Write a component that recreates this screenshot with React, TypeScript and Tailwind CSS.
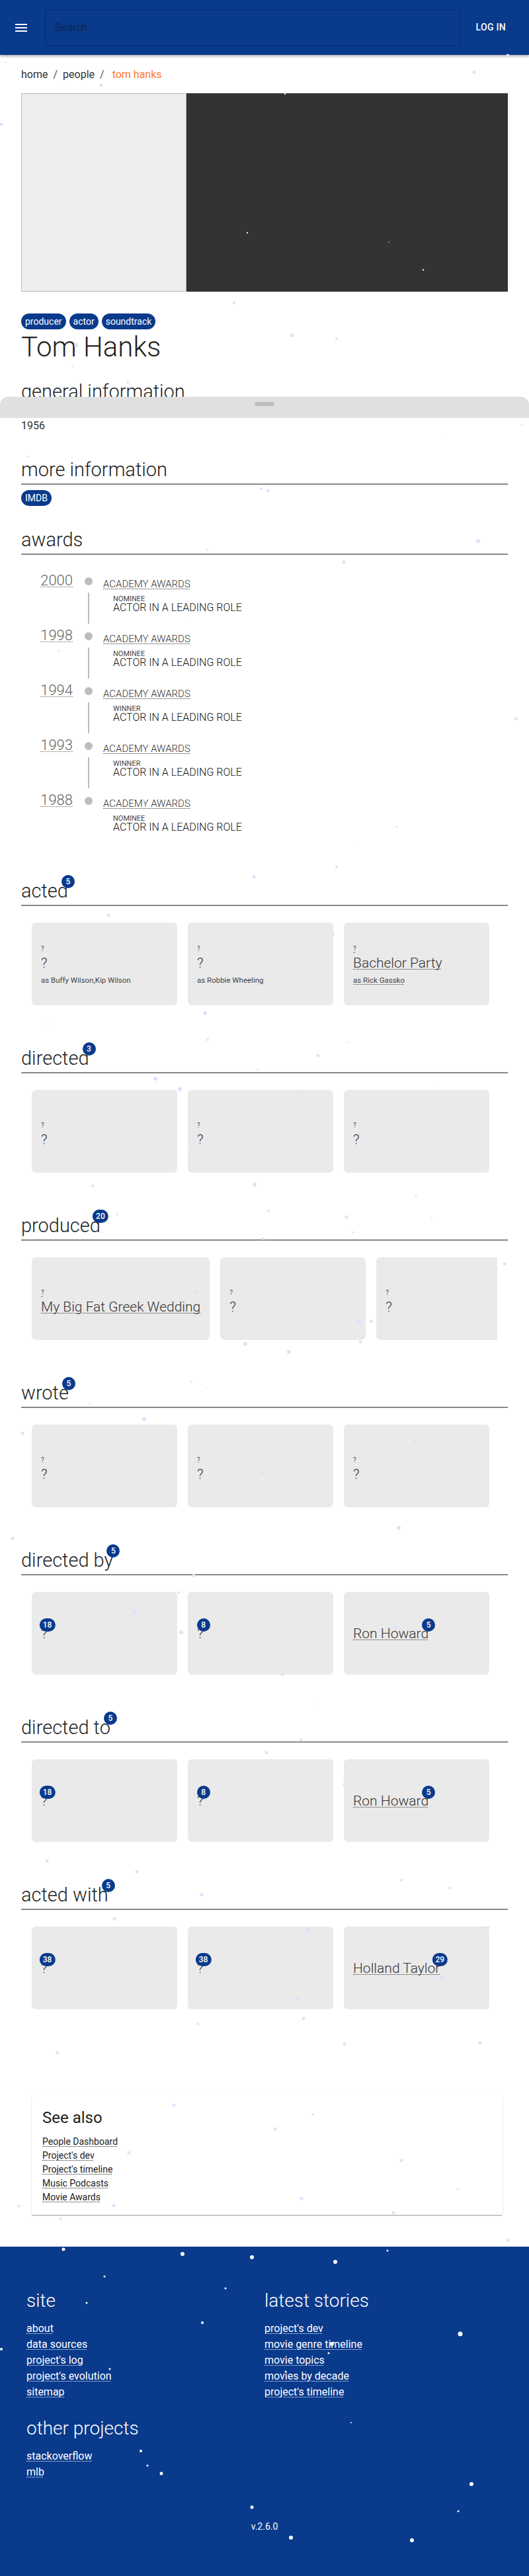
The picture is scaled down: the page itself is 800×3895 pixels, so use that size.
import React from "react";

const BLUE = "bg-[#0a3a8c]";

const dots: [number, number, number][] = [
  [768, 84, 2.5], [9, 94, 1.5], [153, 129, 2.5], [717, 109, 2.5],
  [431, 142, 1.2], [2, 188, 2.5], [374, 352, 1.2], [588, 366, 0.8], [640, 408, 1.2], [354, 458, 2],
  [442, 507, 3], [509, 512, 2], [115, 522, 3], [110, 554, 1.5], [193, 578, 2], [789, 643, 1.5],
  [669, 656, 1], [43, 690, 1.5], [395, 739, 2], [405, 742, 2.5], [486, 735, 1],
  [723, 818, 3], [314, 831, 1.5], [520, 850, 2.5], [287, 940, 1], [89, 984, 1.5], [780, 1087, 2.5],
  [217, 1210, 2], [600, 1250, 1.5],
  [540, 1280, 1], [509, 1311, 2], [384, 1326, 2.5], [164, 1384, 2.5], [196, 1420, 1.5], [504, 1413, 2],
  [310, 1532, 3], [73, 1549, 1], [314, 1572, 2], [525, 1576, 1.2], [481, 1596, 2.5], [390, 1617, 1.5],
  [235, 1631, 3], [272, 1647, 3], [453, 1653, 1.2], [657, 1638, 1], [115, 1668, 1.2], [289, 1734, 1.5],
  [140, 1793, 2], [385, 1791, 3], [629, 1809, 1.5], [406, 1831, 2], [524, 1840, 2.5], [177, 1836, 1.5],
  [653, 1842, 1.2], [533, 1863, 1.5], [398, 1873, 2], [763, 1911, 2.5], [297, 1954, 2.5], [435, 1919, 1.5],
  [449, 1960, 1.5], [543, 1999, 3], [561, 1998, 2.5], [537, 2019, 1.5], [660, 2019, 2], [371, 2032, 3],
  [545, 2029, 2.5], [437, 2044, 3], [289, 2089, 1.5], [312, 2098, 1], [136, 2122, 1.5], [218, 2146, 3],
  [34, 2167, 2.5], [191, 2182, 2], [628, 2178, 3], [396, 2227, 2.5], [226, 2263, 1.5],
  [603, 2310, 3], [19, 2326, 2.5], [293, 2382, 2.5], [270, 2408, 2], [204, 2436, 3], [274, 2468, 3],
  [598, 2462, 2.5], [427, 2532, 2.5], [481, 2576, 1], [455, 2631, 2.5], [403, 2650, 2.5], [521, 2698, 2.5],
  [234, 2711, 2],
  [71, 2814, 2.5], [207, 2830, 2.5], [607, 2843, 2], [680, 2855, 2], [305, 2865, 2.5], [173, 2901, 2.5],
  [466, 2919, 3], [738, 2914, 2], [668, 2991, 3], [450, 3023, 3], [459, 3052, 2.5], [299, 3060, 2],
  [521, 3090, 2.5], [726, 3089, 2.5], [87, 3104, 2.5], [263, 3183, 2.5], [473, 3197, 2],
  [416, 3219, 2.5], [195, 3255, 2.5], [607, 3267, 2.5], [692, 3310, 1.5], [456, 3324, 2.5], [172, 3335, 2.5],
  [28, 3336, 2], [595, 3346, 2.5], [92, 3355, 2], [769, 3387, 2.5],
  [96, 3401, 2.5], [276, 3408, 3], [381, 3413, 3], [507, 3420, 3], [586, 3403, 1.5], [158, 3442, 1.5],
  [341, 3460, 1.5], [131, 3482, 1.5], [306, 3512, 2], [696, 3529, 3.5], [502, 3544, 3], [497, 3558, 1.5],
  [166, 3582, 1.5], [432, 3586, 1.5], [2, 3552, 2], [531, 3663, 1], [213, 3706, 2], [223, 3728, 1.5],
  [244, 3740, 2.5], [713, 3756, 3], [381, 3791, 2.5], [693, 3797, 1.5], [440, 3837, 3], [623, 3841, 3],
];

function dotFill(x: number, y: number) {
  if (y >= 3397) return "#ffffff";
  if (x > 282 && x < 768 && y > 141 && y < 441) return "#e6ebff";
  return "#dce3fb";
}

function Badge({ n }: { n: number }) {
  return (
    <span className="absolute right-0 top-0 flex h-[20px] min-w-[20px] translate-x-1/2 -translate-y-1/2 items-center justify-center rounded-full bg-[#0a3a8c] px-[5px] text-[12px] font-medium leading-none text-white">
      {n}
    </span>
  );
}

function Heading({ title, count }: { title: string; count?: number }) {
  return (
    <div className="flex border-b-2 border-[#888888] pb-[6px]">
      <h2 className="relative text-[29px] font-light leading-none text-[#222222]">
        {title}
        {count !== undefined && <Badge n={count} />}
      </h2>
    </div>
  );
}

const dotted = "underline decoration-dotted decoration-1 underline-offset-[2px]";

function RoleCard({ title, role, linked }: { title: string; role?: string; linked?: boolean }) {
  return (
    <div className="h-[125px] min-w-[220px] shrink-0 rounded-[6px] bg-[#eaeaea] px-[14px] pt-[34px]">
      <div className="text-[10px] leading-[12px] text-[#555555]">
        <span className={linked ? dotted : ""}>?</span>
      </div>
      <div className="mt-[2px] whitespace-nowrap text-[21px] font-light leading-[26px] text-[#333333]">
        <span className={linked ? dotted : ""}>{title}</span>
      </div>
      {role && (
        <div className="mt-[5px] whitespace-nowrap text-[11.5px] leading-[16px] text-[#444444]">
          <span className={linked ? dotted : ""}>{role}</span>
        </div>
      )}
    </div>
  );
}

function TitleCard({ title, linked }: { title: string; linked?: boolean }) {
  return (
    <div className="h-[125px] min-w-[220px] shrink-0 rounded-[6px] bg-[#eaeaea] px-[14px] pt-[48px]">
      <div className="text-[10px] leading-[12px] text-[#555555]">
        <span className={linked ? dotted : ""}>?</span>
      </div>
      <div className="mt-[2px] whitespace-nowrap text-[21px] font-light leading-[26px] text-[#333333]">
        <span className={linked ? dotted : ""}>{title}</span>
      </div>
    </div>
  );
}

function PersonCard({ name, count, linked }: { name: string; count: number; linked?: boolean }) {
  return (
    <div className="h-[125px] min-w-[220px] shrink-0 rounded-[6px] bg-[#eaeaea] px-[14px] pt-[50px]">
      <div className="flex whitespace-nowrap text-[21px] font-light leading-[26px] text-[#333333]">
        <span className={"relative " + (linked ? dotted : "")}>
          {name}
          <Badge n={count} />
        </span>
      </div>
    </div>
  );
}

function CardRow({ children }: { children: React.ReactNode }) {
  return (
    <div className="px-[16px] py-[25px]">
      <div className="flex gap-[16px] overflow-hidden">{children}</div>
    </div>
  );
}

const awards = [
  { year: "2000", status: "NOMINEE" },
  { year: "1998", status: "NOMINEE" },
  { year: "1994", status: "WINNER" },
  { year: "1993", status: "WINNER" },
  { year: "1988", status: "NOMINEE" },
];

function Chip({ label }: { label: string }) {
  return (
    <span className={"flex h-[24px] items-center rounded-full px-[6px] text-[14px] leading-none text-white " + BLUE}>
      {label}
    </span>
  );
}

export default function App() {
  return (
    <div className="relative min-h-[3895px] bg-white font-[Roboto,sans-serif] text-[#222222]">
      {/* header */}
      <header className="relative z-[5] flex h-[83px] items-center bg-[#0a3a8c] pl-[20px] pr-[35px] shadow-[0_2px_4px_rgba(0,0,0,0.35)]">
        <svg width="24" height="24" viewBox="0 0 24 24" fill="#ffffff">
          <path d="M3 18h18v-2H3v2zm0-5h18v-2H3v2zm0-7v2h18V6H3z" />
        </svg>
        <div className="ml-[24px] flex h-[56px] flex-1 items-center rounded-[4px] border border-[#052c6e] px-[14px]">
          <span className="text-[16px] text-[#0c2554]">Search</span>
        </div>
        <span className="ml-[23px] text-[14px] font-medium tracking-[0.3px] text-white">LOG IN</span>
      </header>

      <main className="px-[32px]">
        {/* breadcrumb */}
        <nav className="mt-[18px] flex h-[24px] items-center text-[16px] leading-[24px] text-[#333333]">
          <span>home</span>
          <span className="mx-[8px] text-[#555555]">/</span>
          <span>people</span>
          <span className="mx-[8px] text-[#555555]">/</span>
          <span className="ml-[4px] text-[#ff7a30]">tom hanks</span>
        </nav>

        {/* images */}
        <div className="mt-[16px] flex h-[300px]">
          <div className="w-[250px] border border-[#bbbbbb] bg-[#eeeeee]" />
          <div className="flex-1 bg-[#333333]" />
        </div>

        {/* tags */}
        <div className="mt-[33px] flex gap-[5px]">
          <Chip label="producer" />
          <Chip label="actor" />
          <Chip label="soundtrack" />
        </div>

        <h1 className="mt-[6px] text-[42px] font-light leading-none text-[#222222]">Tom Hanks</h1>

        <section className="mt-[32px]">
          <Heading title="general information" />
          <div className="mt-[5px] text-[12px] leading-[14px] text-[#666666]">birth</div>
          <div className="text-[16px] leading-[20px] text-[#333333]">1956</div>
        </section>

        <section className="mt-[42px]">
          <Heading title="more information" />
          <div className="mt-[8px] flex">
            <Chip label="IMDB" />
          </div>
        </section>

        <section className="mt-[37px]">
          <Heading title="awards" />
          <div className="mt-[28px]">
            {awards.map((a, i) => (
              <div key={a.year} className="flex h-[83px]">
                <div className="w-[78px] text-right text-[22px] font-light leading-none text-[#666666]">
                  <span className={dotted}>{a.year}</span>
                </div>
                <div className="ml-[12px] flex w-[24px] flex-col items-center">
                  <span className="mt-[6px] h-[12px] w-[12px] shrink-0 rounded-full bg-[#bdbdbd]" />
                  {i < awards.length - 1 && <span className="mb-[7px] mt-[11px] w-[2px] flex-1 bg-[#bdbdbd]" />}
                </div>
                <div className="ml-[10px] pt-[9px]">
                  <div className="text-[15px] font-light leading-none text-[#333333]">
                    <span className={dotted}>ACADEMY AWARDS</span>
                  </div>
                  <div className="mt-[9px] pl-[15px]">
                    <div className="text-[11px] leading-none text-[#444444]">{a.status}</div>
                    <div className="text-[16px] font-light leading-none text-[#111111]">ACTOR IN A LEADING ROLE</div>
                  </div>
                </div>
              </div>
            ))}
          </div>
        </section>

        <section className="mt-[51px]">
          <Heading title="acted" count={5} />
          <CardRow>
            <RoleCard title="?" role="as Buffy Wilson,Kip Wilson" />
            <RoleCard title="?" role="as Robbie Wheeling" />
            <RoleCard title="Bachelor Party" role="as Rick Gassko" linked />
          </CardRow>
        </section>

        <section className="mt-[41px]">
          <Heading title="directed" count={3} />
          <CardRow>
            <TitleCard title="?" />
            <TitleCard title="?" />
            <TitleCard title="?" />
          </CardRow>
        </section>

        <section className="mt-[41px]">
          <Heading title="produced" count={20} />
          <CardRow>
            <TitleCard title="My Big Fat Greek Wedding" linked />
            <TitleCard title="?" />
            <TitleCard title="?" />
          </CardRow>
        </section>

        <section className="mt-[41px]">
          <Heading title="wrote" count={5} />
          <CardRow>
            <TitleCard title="?" />
            <TitleCard title="?" />
            <TitleCard title="?" />
          </CardRow>
        </section>

        <section className="mt-[41px]">
          <Heading title="directed by" count={5} />
          <CardRow>
            <PersonCard name="?" count={18} />
            <PersonCard name="?" count={8} />
            <PersonCard name="Ron Howard" count={5} linked />
          </CardRow>
        </section>

        <section className="mt-[41px]">
          <Heading title="directed to" count={5} />
          <CardRow>
            <PersonCard name="?" count={18} />
            <PersonCard name="?" count={8} />
            <PersonCard name="Ron Howard" count={5} linked />
          </CardRow>
        </section>

        <section className="mt-[41px]">
          <Heading title="acted with" count={5} />
          <CardRow>
            <PersonCard name="?" count={38} />
            <PersonCard name="?" count={38} />
            <PersonCard name="Holland Taylor" count={29} linked />
          </CardRow>
        </section>

        <div className="mb-[48px] ml-[16px] mr-[8px] mt-[105px] rounded-[2px] bg-white px-[16px] pb-[16px] pt-[18px] shadow-[0_2px_1px_-1px_rgba(0,0,0,0.2),0_1px_1px_0_rgba(0,0,0,0.14),0_1px_3px_0_rgba(0,0,0,0.12)]">
          <h3 className="text-[24px] leading-[32px] text-[#222222]">See also</h3>
          <ul className="mt-[10px] text-[14px] leading-[21px] text-[#222222]">
            {["People Dashboard", "Project's dev", "Project's timeline", "Music Podcasts", "Movie Awards"].map((l) => (
              <li key={l}>
                <span className={dotted}>{l}</span>
              </li>
            ))}
          </ul>
        </div>
      </main>

      <footer className="h-[498px] bg-[#0a3a8c] px-[40px] pt-[68px] text-white">
        <div className="grid grid-cols-2">
          <div>
            <h4 className="text-[28px] font-light leading-none">site</h4>
            <ul className="mt-[16px] text-[16px] leading-[24px]">
              {["about", "data sources", "project's log", "project's evolution", "sitemap"].map((l) => (
                <li key={l}>
                  <span className={dotted}>{l}</span>
                </li>
              ))}
            </ul>
          </div>
          <div>
            <h4 className="text-[28px] font-light leading-none">latest stories</h4>
            <ul className="mt-[16px] text-[16px] leading-[24px]">
              {["project's dev", "movie genre timeline", "movie topics", "movies by decade", "project's timeline"].map((l) => (
                <li key={l}>
                  <span className={dotted}>{l}</span>
                </li>
              ))}
            </ul>
          </div>
        </div>
        <h4 className="mt-[29px] text-[28px] font-light leading-none">other projects</h4>
        <ul className="mt-[16px] text-[16px] leading-[24px]">
          {["stackoverflow", "mlb"].map((l) => (
            <li key={l}>
              <span className={dotted}>{l}</span>
            </li>
          ))}
        </ul>
        <div className="mt-[60px] text-center text-[14px] leading-[20px]">v.2.6.0</div>
      </footer>

      {/* bottom sheet */}
      <div className="absolute left-0 top-[600px] z-20 h-[32px] w-full rounded-t-[12px] bg-[#e0e0e0]">
        <div className="mx-auto mt-[8px] h-[6px] w-[30px] rounded-full bg-[#bdbdbd]" />
      </div>

      {/* particles */}
      <svg
        className="pointer-events-none absolute left-0 top-0 z-10"
        width="800"
        height="3895"
        viewBox="0 0 800 3895"
      >
        {dots.map(([x, y, r], i) => (
          <circle key={i} cx={x} cy={y} r={r} fill={dotFill(x, y)} />
        ))}
      </svg>
    </div>
  );
}
